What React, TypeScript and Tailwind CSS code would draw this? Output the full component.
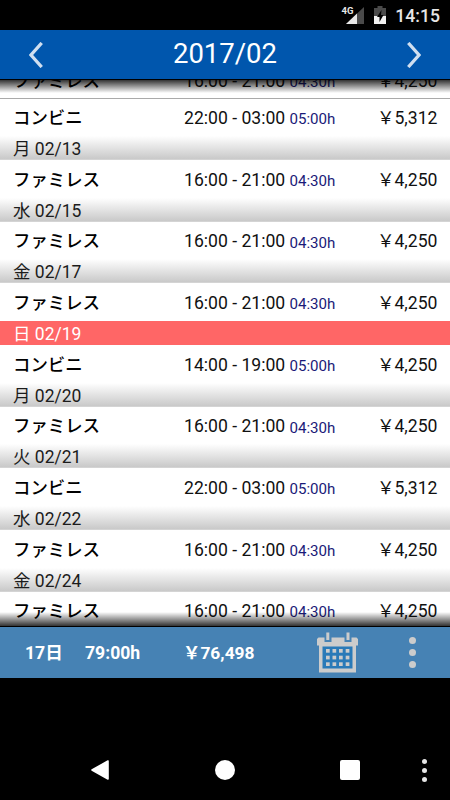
type Shift = {
  date?: string;
  sunday?: boolean;
  name: string;
  time: string;
  hours: string;
  pay: string;
};

const shifts: Shift[] = [
  { name: "ファミレス", time: "16:00 - 21:00", hours: "04:30h", pay: "4,250" },
  { name: "コンビニ", time: "22:00 - 03:00", hours: "05:00h", pay: "5,312" },
  { date: "月 02/13", name: "ファミレス", time: "16:00 - 21:00", hours: "04:30h", pay: "4,250" },
  { date: "水 02/15", name: "ファミレス", time: "16:00 - 21:00", hours: "04:30h", pay: "4,250" },
  { date: "金 02/17", name: "ファミレス", time: "16:00 - 21:00", hours: "04:30h", pay: "4,250" },
  { date: "日 02/19", sunday: true, name: "コンビニ", time: "14:00 - 19:00", hours: "05:00h", pay: "4,250" },
  { date: "月 02/20", name: "ファミレス", time: "16:00 - 21:00", hours: "04:30h", pay: "4,250" },
  { date: "火 02/21", name: "コンビニ", time: "22:00 - 03:00", hours: "05:00h", pay: "5,312" },
  { date: "水 02/22", name: "ファミレス", time: "16:00 - 21:00", hours: "04:30h", pay: "4,250" },
  { date: "金 02/24", name: "ファミレス", time: "16:00 - 21:00", hours: "04:30h", pay: "4,250" },
];

function StatusBar() {
  return (
    <div className="flex h-[30px] shrink-0 items-center justify-end bg-black pr-[10px]">
      <svg width="24" height="20" viewBox="0 0 24 20" className="mr-[10px]">
        <path d="M24 2V19H6Z" fill="#4a4a4a" />
        <path d="M17 8.5V19H6Z" fill="#e8e8e8" />
        <text x="1.5" y="9" fontSize="9.5" fontWeight="700" fontFamily="Roboto" fill="#e8e8e8" stroke="#000" strokeWidth="1.5" paintOrder="stroke">
          4G
        </text>
      </svg>
      <svg width="12" height="18" viewBox="0 0 12 18" className="mr-[9px]">
        <path d="M3.5 0H8.5V2H12V18H0V2H3.5Z" fill="#4a4a4a" />
        <path d="M0 10H12V18H0Z" fill="#f2f2f2" />
        <path d="M7.5 4L3 11H5.5V16L9.5 9H7Z" fill="#000" />
      </svg>
      <span className="pt-px text-[17.6px] leading-[20px] font-medium text-[#e6e6e6]">14:15</span>
    </div>
  );
}

function MonthBar() {
  return (
    <div className="flex h-[49px] shrink-0 items-center justify-between bg-[#0056ad] px-[29px]">
      <svg width="14" height="26" viewBox="0 0 14 26" fill="none" stroke="#d0dff0" strokeWidth="3.3">
        <path d="M12.7 1L2 13L12.7 25" />
      </svg>
      <h1 className="pb-px text-[27.5px] leading-[32px] text-white">2017/02</h1>
      <svg width="14" height="26" viewBox="0 0 14 26" fill="none" stroke="#d0dff0" strokeWidth="3.3">
        <path d="M1.3 1L12 13L1.3 25" />
      </svg>
    </div>
  );
}

function ShiftRow({ shift }: { shift: Shift }) {
  return (
    <div className="shrink-0">
      {shift.date && (
        <div
          className={`h-[24px] pt-px pl-[13px] text-[17.5px] leading-[24px] ${
            shift.sunday
              ? "bg-[#ff6666] text-white"
              : "border-b border-[#d4d4d4] bg-linear-to-b from-white to-[#c9c9c9] text-[#1c1c1c]"
          }`}
        >
          {shift.date}
        </div>
      )}
      <div className="flex h-[37.65px] items-center pt-[1.5px] pr-[12.5px] pl-[13px] text-[17.6px] leading-[24px] text-[#111]">
        <span className="w-[171px] text-[17.4px] font-medium text-black">{shift.name}</span>
        <span className="w-[105.5px]">{shift.time}</span>
        <span className="pt-[2.5px] text-[15.1px] text-[#1a1a78]">{shift.hours}</span>
        <span className="ml-auto">￥{shift.pay}</span>
      </div>
    </div>
  );
}

function TotalsBar() {
  return (
    <div className="flex h-[51px] shrink-0 items-center bg-[#4682b4] pl-[25px] text-[17.6px] font-bold text-white">
      <span className="w-[60px] pt-[2px]">17日</span>
      <span className="w-[98px] pt-[2px]">79:00h</span>
      <span className="w-[133px] pt-[2px] text-[17.4px]">￥76,498</span>
      <svg width="42" height="42" viewBox="0 0 42 42" fill="#cccccc">
        <path d="M5 13H37V38H5Z" fill="#2a7ab8" />
        <path fillRule="evenodd" d="M2.5 5.5H8.5V10H15.5V5.5H28.5V10H35.5V5.5H40.5L42 7V13.5H40V40.5H3V13.5H1V7ZM6.5 14.5V36.5H36.5V14.5Z" />
        <path d="M10.3 0.5H13.3V8H10.3ZM30.5 0.5H33.5V8H30.5Z" />
        {[17, 23.7, 30.3].map((y) =>
          [10, 16.5, 23, 29.7].map((x) => <rect key={`${x}-${y}`} x={x} y={y} width="3.7" height="3.7" />)
        )}
      </svg>
      <div className="ml-[51px] flex flex-col gap-[4.7px]">
        <span className="size-[7px] rounded-full bg-[#cccccc]" />
        <span className="size-[7px] rounded-full bg-[#cccccc]" />
        <span className="size-[7px] rounded-full bg-[#cccccc]" />
      </div>
    </div>
  );
}

function NavBar() {
  return (
    <div className="mt-auto flex h-[60px] shrink-0 items-center bg-black pl-[91px]">
      <svg width="18" height="20" viewBox="0 0 18 20" className="mr-[106px]">
        <path d="M1 10L17 1V19Z" fill="#fff" stroke="#fff" strokeWidth="1.6" strokeLinejoin="round" />
      </svg>
      <span className="mr-[105px] size-[20px] rounded-full bg-white" />
      <span className="mr-[62px] size-[20px] rounded-[2px] bg-white" />
      <div className="flex flex-col gap-[4px]">
        <span className="size-[5px] rounded-full bg-[#e6e6e6]" />
        <span className="size-[5px] rounded-full bg-[#e6e6e6]" />
        <span className="size-[5px] rounded-full bg-[#e6e6e6]" />
      </div>
    </div>
  );
}

export default function App() {
  return (
    <div lang="ja" className="flex h-[800px] w-[450px] flex-col overflow-hidden bg-black font-[Roboto,'Noto_Sans_CJK_JP',sans-serif]">
      <StatusBar />
      <MonthBar />
      <div className="relative h-[548px] shrink-0 overflow-hidden bg-white">
        {/* scrolled part way into the first row */}
        <div className="-mt-[18px] flex flex-col">
          <div className="h-[37.5px] border-b border-[#aaa]">
            <ShiftRow shift={shifts[0]} />
          </div>
          <div className="flex flex-col">
            {shifts.slice(1).map((shift, index) => (
              <ShiftRow key={index} shift={shift} />
            ))}
          </div>
        </div>
        <div className="absolute inset-x-0 top-0 h-[14px] border-t border-black bg-linear-to-b from-black/80 to-transparent" />
        <div className="absolute inset-x-0 bottom-0 h-[15px] border-b border-black bg-linear-to-t from-black/80 to-transparent" />
      </div>
      <TotalsBar />
      <NavBar />
    </div>
  );
}
